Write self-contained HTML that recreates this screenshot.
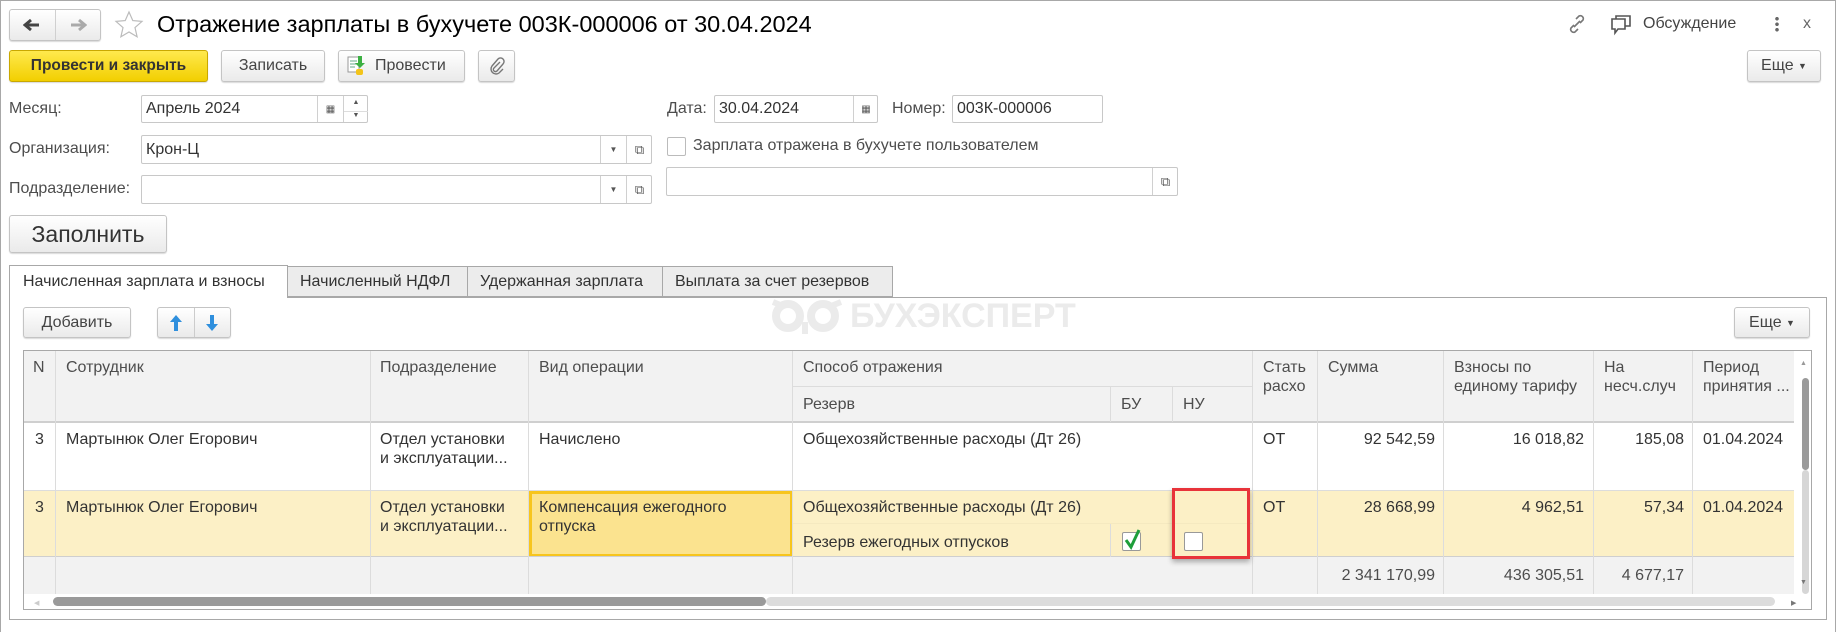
<!DOCTYPE html>
<html><head><meta charset="utf-8">
<style>
*{box-sizing:border-box;margin:0;padding:0}
body{width:1836px;height:632px;background:#fff;font-family:"Liberation Sans",Arial,sans-serif;color:#333;position:relative;overflow:hidden;font-size:16px}
.a{position:absolute}
.btn{position:absolute;border:1px solid #c4c4c4;border-radius:3px;background:linear-gradient(#fff,#eaeaea);box-shadow:0 1px 1px rgba(0,0,0,.15);color:#444;font-size:16px;display:flex;align-items:center;justify-content:center}
.inp{position:absolute;border:1px solid #c8c8c8;background:#fff;border-radius:2px;font-size:16px;color:#333;display:flex;align-items:center;padding-left:4px}
.lbl{position:absolute;font-size:16px;color:#4d4d4d}
.sb{position:absolute;border-left:1px solid #d0d0d0;height:100%;top:0;display:flex;align-items:center;justify-content:center;font-size:10px;color:#555}
.vl{position:absolute;width:1px;background:#dcdcdc}
.hl{position:absolute;height:1px;background:#dcdcdc}
.t{position:absolute;font-size:16px;color:#333;line-height:19px;white-space:nowrap}
.h{position:absolute;font-size:16px;color:#4d4d4d;line-height:19px;white-space:nowrap}
.r{text-align:right}
</style></head><body>
<div class="a" style="left:0;top:0;width:1836px;height:632px;border:1px solid #a8a8a8;border-bottom:none"></div>

<div class="btn" style="left:9px;top:9px;width:92px;height:32px;justify-content:flex-start">
 <div style="width:46px;height:100%;border-right:1px solid #d0d0d0;display:flex;align-items:center;justify-content:center"><svg width="18" height="14" viewBox="0 0 18 14"><path d="M2 7h14M8 2L2 7l6 5" stroke="#444" stroke-width="3" fill="none"/></svg></div>
 <div style="width:45px;display:flex;align-items:center;justify-content:center"><svg width="18" height="14" viewBox="0 0 18 14"><path d="M2 7h14M10 2l6 5-6 5" stroke="#aaa" stroke-width="3" fill="none"/></svg></div>
</div>
<svg class="a" style="left:114px;top:10px" width="30" height="30" viewBox="0 0 30 30"><path d="M15 2l3.8 8.6 9.2.8-7 6.2 2.1 9.2L15 22l-8.1 4.8 2.1-9.2-7-6.2 9.2-.8z" fill="none" stroke="#bbb" stroke-width="1.2"/></svg>
<div class="a" style="left:157px;top:9px;font-size:23.5px;color:#000;white-space:nowrap;line-height:30px">Отражение зарплаты в бухучете 003К-000006 от 30.04.2024</div>

<svg class="a" style="left:1567px;top:13px" width="20" height="22" viewBox="0 0 20 22"><path d="M9 6l3-3a3 3 0 0 1 4 4l-3 3M11 16l-3 3a3 3 0 0 1-4-4l3-3M7 14l6-6" stroke="#777" stroke-width="1.6" fill="none"/></svg>
<svg class="a" style="left:1610px;top:14px" width="22" height="22" viewBox="0 0 22 22"><path d="M2 5h13v10H8l-3 4v-4H2z" stroke="#555" stroke-width="1.6" fill="none"/><path d="M6 5V2h14v10h-5" stroke="#555" stroke-width="1.6" fill="none"/></svg>
<div class="a" style="left:1643px;top:15px;font-size:16px;color:#444">Обсуждение</div>
<div class="a" style="left:1775px;top:16px;width:4px;height:16px;background:radial-gradient(circle,#666 1.6px,transparent 2px) 0 0/4px 5.5px"></div>
<div class="a" style="left:1803px;top:15px;font-size:16px;color:#666">x</div>

<div class="btn" style="left:9px;top:50px;width:199px;height:32px;background:linear-gradient(#ffe94d,#f2cf00);border-color:#c9a800;color:#333;font-weight:bold;font-size:15.5px">Провести и закрыть</div>
<div class="btn" style="left:221px;top:50px;width:104px;height:32px">Записать</div>
<div class="btn" style="left:338px;top:50px;width:127px;height:32px;justify-content:flex-start;padding-left:8px">
 <svg width="18" height="22" viewBox="0 0 18 22" style="margin-right:10px"><rect x="1" y="2" width="11" height="15" fill="#fff" stroke="#999"/><path d="M3 6h7M3 9h7M3 12h5" stroke="#6a8"/><rect x="9" y="14" width="7" height="6" rx="2" fill="#f3c41a"/><path d="M11 1v7h-3l5 5 5-5h-3V1z" fill="#3cb043"/></svg>Провести</div>
<div class="btn" style="left:478px;top:50px;width:37px;height:32px"><svg width="16" height="18" viewBox="0 0 16 18"><path d="M11 5l-6 6a2 2 0 0 0 3 3l6-7a3.5 3.5 0 0 0-5-5L3 9a5 5 0 0 0 7 7l4-4" stroke="#777" stroke-width="1.4" fill="none"/></svg></div>
<div class="btn" style="left:1747px;top:50px;width:74px;height:32px">Еще&nbsp;<span style="font-size:9px">▼</span></div>

<div class="lbl" style="left:9px;top:100px">Месяц:</div>
<div class="inp" style="left:141px;top:95px;width:227px;height:28px">Апрель 2024
 <div class="sb" style="left:175px;width:26px">▦</div>
 <div class="sb" style="left:201px;width:25px;flex-direction:column;font-size:7px"><div style="height:50%;width:100%;border-bottom:1px solid #ddd;text-align:center">▲</div><div style="text-align:center">▼</div></div>
</div>
<div class="lbl" style="left:667px;top:100px">Дата:</div>
<div class="inp" style="left:714px;top:95px;width:164px;height:28px">30.04.2024<div class="sb" style="left:138px;width:25px">▦</div></div>
<div class="lbl" style="left:892px;top:100px">Номер:</div>
<div class="inp" style="left:952px;top:95px;width:151px;height:28px">003К-000006</div>

<div class="lbl" style="left:9px;top:140px">Организация:</div>
<div class="inp" style="left:141px;top:135px;width:511px;height:29px">Крон-Ц<div class="sb" style="left:458px;width:26px;font-size:8px">▼</div><div class="sb" style="left:484px;width:26px;font-size:13px">⧉</div></div>
<div class="a" style="left:667px;top:137px;width:19px;height:19px;border:1px solid #bbb;border-radius:2px;background:#fff"></div>
<div class="lbl" style="left:693px;top:137px">Зарплата отражена в бухучете пользователем</div>

<div class="lbl" style="left:9px;top:180px">Подразделение:</div>
<div class="inp" style="left:141px;top:175px;width:511px;height:29px"><div class="sb" style="left:458px;width:26px;font-size:8px">▼</div><div class="sb" style="left:484px;width:26px;font-size:13px">⧉</div></div>
<div class="inp" style="left:666px;top:167px;width:512px;height:29px"><div class="sb" style="left:485px;width:26px;font-size:13px">⧉</div></div>

<div class="btn" style="left:9px;top:215px;width:158px;height:38px;font-size:23px;color:#333">Заполнить</div>

<div class="a" style="left:9px;top:297px;width:1818px;height:323px;border:1px solid #a8a8a8"></div>
<div class="a" style="left:9px;top:265px;width:279px;height:33px;border:1px solid #a8a8a8;border-bottom:none;background:#fff;font-size:16px;padding:7px 0 0 13px;color:#333">Начисленная зарплата и взносы</div>
<div class="a" style="left:287px;top:266px;width:181px;height:31px;border:1px solid #a8a8a8;background:#ececec;font-size:16px;padding:6px 0 0 12px;color:#333">Начисленный НДФЛ</div>
<div class="a" style="left:467px;top:266px;width:196px;height:31px;border:1px solid #a8a8a8;background:#ececec;font-size:16px;padding:6px 0 0 12px;color:#333">Удержанная зарплата</div>
<div class="a" style="left:662px;top:266px;width:231px;height:31px;border:1px solid #a8a8a8;background:#ececec;font-size:16px;padding:6px 0 0 12px;color:#333">Выплата за счет резервов</div>

<svg class="a" style="left:767px;top:298px" width="80" height="36" viewBox="0 0 80 36"><circle cx="21" cy="18" r="12" fill="none" stroke="#ebebeb" stroke-width="8"/><circle cx="56" cy="18" r="12" fill="none" stroke="#ebebeb" stroke-width="8"/><path d="M6 4l10 4M74 4l-10 4M38 24l0 12" stroke="#ebebeb" stroke-width="6"/></svg>
<div class="a" style="left:850px;top:297px;font-size:34px;font-weight:bold;color:#ebebeb;letter-spacing:0">БУХЭКСПЕРТ</div>

<div class="btn" style="left:23px;top:307px;width:108px;height:31px">Добавить</div>
<div class="btn" style="left:157px;top:307px;width:74px;height:31px;justify-content:flex-start">
 <div style="width:37px;height:100%;border-right:1px solid #ccc;display:flex;align-items:center;justify-content:center"><svg width="14" height="18" viewBox="0 0 14 18"><path d="M7 1L1 8h4v9h4V8h4z" fill="#2f8fdd"/></svg></div>
 <div style="width:36px;display:flex;align-items:center;justify-content:center"><svg width="14" height="18" viewBox="0 0 14 18"><path d="M7 17L1 10h4V1h4v9h4z" fill="#2f8fdd"/></svg></div>
</div>
<div class="btn" style="left:1734px;top:307px;width:76px;height:31px">Еще&nbsp;<span style="font-size:9px">▼</span></div>

<div class="a" style="left:23px;top:350px;width:1789px;height:260px;border:1px solid #a8a8a8;background:#fff;overflow:hidden">
 <div class="a" style="left:0;top:0;width:1770px;height:71px;background:#f2f2f2"></div>
 <div class="a" style="left:0;top:140px;width:1770px;height:66px;background:#fcf0c6"></div>
 <div class="a" style="left:505px;top:140px;width:264px;height:66px;background:#fbe38f;border:3px solid #f7c51d"></div>
 <div class="a" style="left:0;top:206px;width:1770px;height:37px;background:#f2f2f2"></div>
 <div class="hl" style="left:0;top:70px;width:1770px;background:#cfcfcf;height:2px"></div>
 <div class="hl" style="left:0;top:139px;width:1770px"></div>
 <div class="hl" style="left:0;top:205px;width:1770px;background:#cfcfcf"></div>
 <div class="hl" style="left:769px;top:35px;width:460px"></div>
 <div class="hl" style="left:769px;top:172px;width:460px;background:#f5e9c0"></div>
 <div class="vl" style="left:31px;top:0;height:243px"></div>
 <div class="vl" style="left:346px;top:0;height:243px"></div>
 <div class="vl" style="left:504px;top:0;height:243px"></div>
 <div class="vl" style="left:768px;top:0;height:243px"></div>
 <div class="vl" style="left:1086px;top:36px;height:35px"></div>
 <div class="vl" style="left:1086px;top:173px;height:33px"></div>
 <div class="vl" style="left:1148px;top:36px;height:35px"></div>
 <div class="vl" style="left:1228px;top:0;height:243px"></div>
 <div class="vl" style="left:1293px;top:0;height:243px"></div>
 <div class="vl" style="left:1419px;top:0;height:243px"></div>
 <div class="vl" style="left:1569px;top:0;height:243px"></div>
 <div class="vl" style="left:1668px;top:0;height:243px"></div>
 <div class="h" style="left:9px;top:7px">N</div>
 <div class="h" style="left:42px;top:7px">Сотрудник</div>
 <div class="h" style="left:356px;top:7px">Подразделение</div>
 <div class="h" style="left:515px;top:7px">Вид операции</div>
 <div class="h" style="left:779px;top:7px">Способ отражения</div>
 <div class="h" style="left:779px;top:44px">Резерв</div>
 <div class="h" style="left:1097px;top:44px">БУ</div>
 <div class="h" style="left:1159px;top:44px">НУ</div>
 <div class="h" style="left:1239px;top:7px">Стать<br>расхо</div>
 <div class="h" style="left:1304px;top:7px">Сумма</div>
 <div class="h" style="left:1430px;top:7px">Взносы по<br>единому тарифу</div>
 <div class="h" style="left:1580px;top:7px">На<br>несч.случ</div>
 <div class="h" style="left:1679px;top:7px">Период<br>принятия ...</div>
 <div class="t" style="left:11px;top:79px">3</div>
 <div class="t" style="left:42px;top:79px">Мартынюк Олег Егорович</div>
 <div class="t" style="left:356px;top:79px">Отдел установки<br>и эксплуатации...</div>
 <div class="t" style="left:515px;top:79px">Начислено</div>
 <div class="t" style="left:779px;top:79px">Общехозяйственные расходы (Дт 26)</div>
 <div class="t" style="left:1239px;top:79px">ОТ</div>
 <div class="t r" style="left:1300px;top:79px;width:111px">92 542,59</div>
 <div class="t r" style="left:1420px;top:79px;width:140px">16 018,82</div>
 <div class="t r" style="left:1570px;top:79px;width:90px">185,08</div>
 <div class="t" style="left:1679px;top:79px">01.04.2024</div>
 <div class="t" style="left:11px;top:147px">3</div>
 <div class="t" style="left:42px;top:147px">Мартынюк Олег Егорович</div>
 <div class="t" style="left:356px;top:147px">Отдел установки<br>и эксплуатации...</div>
 <div class="t" style="left:515px;top:147px">Компенсация ежегодного<br>отпуска</div>
 <div class="t" style="left:779px;top:147px">Общехозяйственные расходы (Дт 26)</div>
 <div class="t" style="left:779px;top:182px">Резерв ежегодных отпусков</div>
 <div class="a" style="left:1098px;top:181px;width:19px;height:19px;border:1px solid #999;background:#fff;border-radius:2px"></div>
 <svg class="a" style="left:1099px;top:177px" width="20" height="22" viewBox="0 0 20 22"><path d="M3 12l5 7L16 2" stroke="#1e9e3a" stroke-width="3" fill="none"/></svg>
 <div class="a" style="left:1160px;top:181px;width:19px;height:19px;border:1px solid #999;background:#fff;border-radius:2px"></div>
 <div class="t" style="left:1239px;top:147px">ОТ</div>
 <div class="t r" style="left:1300px;top:147px;width:111px">28 668,99</div>
 <div class="t r" style="left:1420px;top:147px;width:140px">4 962,51</div>
 <div class="t r" style="left:1570px;top:147px;width:90px">57,34</div>
 <div class="t" style="left:1679px;top:147px">01.04.2024</div>
 <div class="t r" style="left:1300px;top:215px;width:111px;color:#4d4d4d">2 341 170,99</div>
 <div class="t r" style="left:1420px;top:215px;width:140px;color:#4d4d4d">436 305,51</div>
 <div class="t r" style="left:1570px;top:215px;width:90px;color:#4d4d4d">4 677,17</div>
 <div class="a" style="left:1772px;top:0;width:17px;height:243px;background:#fff"></div>
 <div class="a" style="left:1776px;top:9px;font-size:7px;color:#999">▲</div>
 <div class="a" style="left:1778px;top:27px;width:7px;height:92px;background:#9a9a9a;border-radius:4px"></div>
 <div class="a" style="left:1778px;top:119px;width:7px;height:124px;background:#d6d6d6;border-radius:4px"></div>
 <div class="a" style="left:1776px;top:228px;font-size:7px;color:#777">▼</div>
 <div class="a" style="left:0;top:243px;width:1789px;height:17px;background:#fff"></div>
 <div class="a" style="left:10px;top:248px;font-size:7px;color:#ccc">◀</div>
 <div class="a" style="left:29px;top:246px;width:713px;height:9px;background:#9a9a9a;border-radius:5px"></div>
 <div class="a" style="left:742px;top:246px;width:1009px;height:9px;background:#dcdcdc;border-radius:5px"></div>
 <div class="a" style="left:1767px;top:248px;font-size:7px;color:#777">▶</div>
</div>
<div class="a" style="left:1172px;top:488px;width:78px;height:71px;border:3px solid #e8333a;box-shadow:0 3px 5px rgba(0,0,0,.3)"></div>
</body></html>
